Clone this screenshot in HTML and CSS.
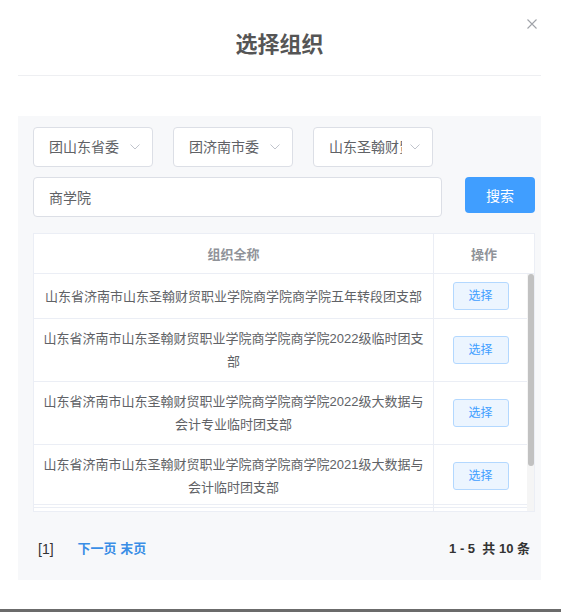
FILE: index.html
```html
<!DOCTYPE html>
<html lang="zh">
<head>
<meta charset="utf-8">
<title>选择组织</title>
<link rel="stylesheet" href="styles.css">
</head>
<body>
<div class="page">
  <div class="dialog">
    <div class="dialog-header">
      <div class="title">选择组织</div>
      <svg class="close" viewBox="0 0 10 10" width="10" height="10"><path d="M0.5 0.5L9.5 9.5M9.5 0.5L0.5 9.5" stroke="#a0a3a9" stroke-width="1.1" fill="none"/></svg>
    </div>
    <div class="panel">
      <div class="selects">
        <div class="select"><span class="select-text">团山东省委</span><svg class="arrow" viewBox="0 0 10 6" width="10" height="6"><path d="M0.5 0.5L5 5L9.5 0.5" stroke="#c0c4cc" stroke-width="1" fill="none"/></svg></div>
        <div class="select"><span class="select-text">团济南市委</span><svg class="arrow" viewBox="0 0 10 6" width="10" height="6"><path d="M0.5 0.5L5 5L9.5 0.5" stroke="#c0c4cc" stroke-width="1" fill="none"/></svg></div>
        <div class="select"><span class="select-text">山东圣翰财贸职业学院</span><svg class="arrow" viewBox="0 0 10 6" width="10" height="6"><path d="M0.5 0.5L5 5L9.5 0.5" stroke="#c0c4cc" stroke-width="1" fill="none"/></svg></div>
      </div>
      <div class="search-row">
        <div class="input">商学院</div>
        <div class="search-btn">搜索</div>
      </div>
      <div class="table">
        <div class="thead">
          <div class="th">组织全称</div>
          <div class="th">操作</div>
        </div>
        <div class="tbody">
          <div class="rows">
            <div class="tr"><div class="td">山东省济南市山东圣翰财贸职业学院商学院商学院五年转段团支部</div><div class="td"><span class="btn">选择</span></div></div>
            <div class="tr"><div class="td">山东省济南市山东圣翰财贸职业学院商学院商学院2022级临时团支部</div><div class="td"><span class="btn">选择</span></div></div>
            <div class="tr"><div class="td">山东省济南市山东圣翰财贸职业学院商学院商学院2022级大数据与会计专业临时团支部</div><div class="td"><span class="btn">选择</span></div></div>
            <div class="tr"><div class="td">山东省济南市山东圣翰财贸职业学院商学院商学院2021级大数据与会计临时团支部</div><div class="td"><span class="btn">选择</span></div></div>
            <div class="tr tr-partial"><div class="td"></div><div class="td"></div></div>
          </div>
          <div class="scrollbar"><div class="thumb"></div></div>
        </div>
      </div>
      <div class="pager">
        <div class="pager-left"><span class="cur">[1]</span><span class="links">下一页 末页</span></div>
        <div class="total">1 - 5&nbsp;&nbsp;共 10 条</div>
      </div>
    </div>
  </div>
  <div class="bottom-bar"></div>
</div>
</body>
</html>
```
FILE: styles.css
```css
* { box-sizing: border-box; }
body {
  margin: 0;
  background: #fff;
  font-family: "Liberation Sans", "Noto Sans CJK SC", sans-serif;
}
.page {
  height: 612px;
  display: flex;
  flex-direction: column;
}
.dialog {
  position: relative;
  width: 523px;
  margin-left: 18px;
  flex: 1;
}
.dialog-header {
  height: 76px;
  padding-top: 34px;
  border-bottom: 1px solid #eeeff2;
  text-align: center;
}
.title {
  font-size: 22px;
  line-height: 22px;
  font-weight: bold;
  color: #555;
}
.close {
  position: absolute;
  top: 19px;
  right: 4px;
}
.panel {
  margin-top: 40px;
  height: 464px;
  background: #f7f8fa;
  padding: 11px 6px 0 15px;
}
.selects {
  display: flex;
  gap: 20px;
}
.select {
  width: 120px;
  height: 40px;
  background: #fff;
  border: 1px solid #dcdfe6;
  border-radius: 4px;
  display: flex;
  align-items: center;
  padding: 0 12px 0 15px;
}
.select-text {
  width: 73px;
  overflow: hidden;
  white-space: nowrap;
  font-size: 14px;
  line-height: 20px;
  color: #606266;
}
.arrow {
  margin-left: 8px;
  flex: none;
}
.search-row {
  display: flex;
  align-items: flex-start;
  margin-top: 10px;
}
.input {
  width: 410px;
  height: 40px;
  background: #fff;
  border: 1px solid #dcdfe6;
  border-radius: 4px;
  padding-left: 15px;
  display: flex;
  align-items: center;
  font-size: 14px;
  color: #606266;
}
.search-btn {
  margin-left: 23px;
  width: 70px;
  height: 36px;
  background: #409eff;
  border-radius: 4px;
  color: #fff;
  font-size: 14px;
  display: flex;
  align-items: center;
  justify-content: center;
}
.table {
  margin-top: 16px;
  width: 502px;
  background: #fff;
  border: 1px solid #ebeef5;
}
.thead {
  display: grid;
  grid-template-columns: 400px 1fr;
  height: 40px;
  border-bottom: 1px solid #ebeef5;
}
.th {
  display: flex;
  align-items: center;
  justify-content: center;
  font-size: 13px;
  font-weight: bold;
  color: #909399;
}
.th:first-child { border-right: 1px solid #ebeef5; }
.tbody {
  height: 237px;
  display: flex;
  overflow: hidden;
}
.rows {
  flex: 1;
  min-width: 0;
}
.scrollbar {
  width: 7px;
  flex: none;
  background: #f5f5f5;
  padding: 0 0.5px;
}
.thumb {
  height: 192px;
  background: #c1c1c1;
  border-radius: 3px;
}
.tr {
  display: grid;
  grid-template-columns: 400px 1fr;
  border-bottom: 1px solid #ebeef5;
}
.tr-partial {
  height: 8px;
  border-top: 1px solid #ebeef5;
  margin-top: -4px;
}
.td {
  display: flex;
  align-items: center;
  justify-content: center;
  text-align: center;
  padding: 8px 8px;
  font-size: 13px;
  line-height: 23px;
  color: #606266;
}
.tr-partial .td { padding: 0; }
.td:first-child { border-right: 1px solid #ebeef5; }
.btn {
  display: inline-flex;
  align-items: center;
  justify-content: center;
  width: 56px;
  height: 28px;
  border: 1px solid #b3d8ff;
  background: #ecf5ff;
  border-radius: 3px;
  font-size: 12px;
  color: #409eff;
}
.pager {
  margin-top: 27px;
  padding: 0 5px;
  display: flex;
  justify-content: space-between;
  font-size: 13px;
  line-height: 20px;
  color: #333;
}
.pager-left { display: flex; gap: 24px; }
.cur { font-size: 14px; }
.links { color: #3a8ee6; font-weight: bold; }
.total { font-weight: bold; }
.bottom-bar {
  height: 3px;
  background: #6b6b6b;
}
```
